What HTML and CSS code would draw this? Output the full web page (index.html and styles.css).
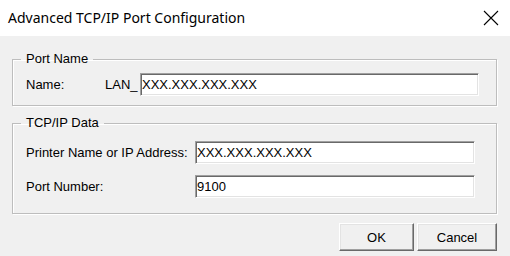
FILE: index.html
```html
<!DOCTYPE html>
<html>
<head>
    <title>Advanced TCP/IP Port Configuration</title>
    <link rel="stylesheet" href="styles.css">
</head>
<body>
    <div class="title-bar">
        <span class="title">Advanced TCP/IP Port Configuration</span>
        <button class="close-button" aria-label="Close">
            <svg width="16" height="16" viewBox="0 0 16 16">
                <path d="M1 1 L15 15 M15 1 L1 15" stroke="#000" stroke-width="1.1" fill="none"/>
            </svg>
        </button>
    </div>

    <div class="dialog">
        <fieldset class="group group-name">
            <legend>Port Name</legend>
            <div class="row">
                <label class="label-name" for="portName">Name:</label>
                <span class="prefix">LAN_</span>
                <input type="text" id="portName" class="field field-wide" value="XXX.XXX.XXX.XXX">
            </div>
        </fieldset>

        <fieldset class="group group-data">
            <legend>TCP/IP Data</legend>
            <div class="row">
                <label class="label-data" for="printerAddress">Printer Name or IP Address:</label>
                <input type="text" id="printerAddress" class="field" value="XXX.XXX.XXX.XXX">
            </div>
            <div class="row">
                <label class="label-data" for="portNumber">Port Number:</label>
                <input type="text" id="portNumber" class="field" value="9100">
            </div>
        </fieldset>

        <div class="buttons">
            <button class="dlg-button btn-ok">OK</button>
            <button class="dlg-button btn-cancel">Cancel</button>
        </div>
    </div>
</body>
</html>
```

FILE: styles.css
```css
body {
    margin: 0;
    padding: 0;
    background-color: #f0f0f0;
    font-family: "Liberation Sans", Arial, sans-serif;
    font-size: 13px;
    color: #000;
    overflow: hidden;
}

.title-bar {
    height: 36px;
    background-color: #fff;
    display: flex;
    align-items: center;
    justify-content: space-between;
    padding: 0 11px 0 8px;
}

.title {
    font-family: "Noto Sans", "Open Sans", sans-serif;
    font-size: 14px;
    margin-top: -1px;
}

.close-button {
    border: none;
    background: none;
    padding: 0;
    width: 16px;
    height: 16px;
    display: flex;
}

.dialog {
    padding: 15px 13px 0 12px;
}

.group {
    margin: 0;
    border: 1px solid #bdbdbd;
    box-shadow: inset 1px 1px #fff, 1px 1px #fff;
    padding: 0 17px 0 13px;
}

.group legend {
    padding: 0 5px;
    margin-left: -5px;
    line-height: 16px;
}

.group-name {
    padding-top: 6px;
    padding-bottom: 9px;
}

.group-data {
    margin-top: 9px;
    padding-top: 10px;
    padding-bottom: 15px;
    padding-right: 21px;
    display: flex;
    flex-direction: column;
    gap: 11px;
}

.row {
    display: flex;
    align-items: center;
}

.label-name {
    width: 79px;
}

.prefix {
    width: 35px;
}

.label-data {
    width: 169px;
}

.field {
    box-sizing: border-box;
    height: 23px;
    flex: 1;
    min-width: 0;
    font-family: "Liberation Sans", Arial, sans-serif;
    font-size: 13px;
    color: #000;
    background-color: #fff;
    padding: 0 0 0 1px;
    border: 1px solid;
    border-color: #a0a0a0 #fff #fff #a0a0a0;
    box-shadow: inset 1px 1px #696969, inset -1px -1px #e3e3e3;
    outline: none;
}

.buttons {
    display: flex;
    justify-content: flex-end;
    gap: 3px;
    margin-top: 9px;
}

.dlg-button {
    height: 28px;
    font-family: "Liberation Sans", Arial, sans-serif;
    font-size: 13px;
    color: #000;
    background-color: #f0f0f0;
    border: 1px solid;
    border-color: #fff #696969 #696969 #fff;
    box-shadow: inset -1px -1px #a0a0a0, inset 1px 1px #e3e3e3;
    padding: 0;
}

.btn-ok {
    width: 75px;
}

.btn-cancel {
    width: 80px;
}
```
